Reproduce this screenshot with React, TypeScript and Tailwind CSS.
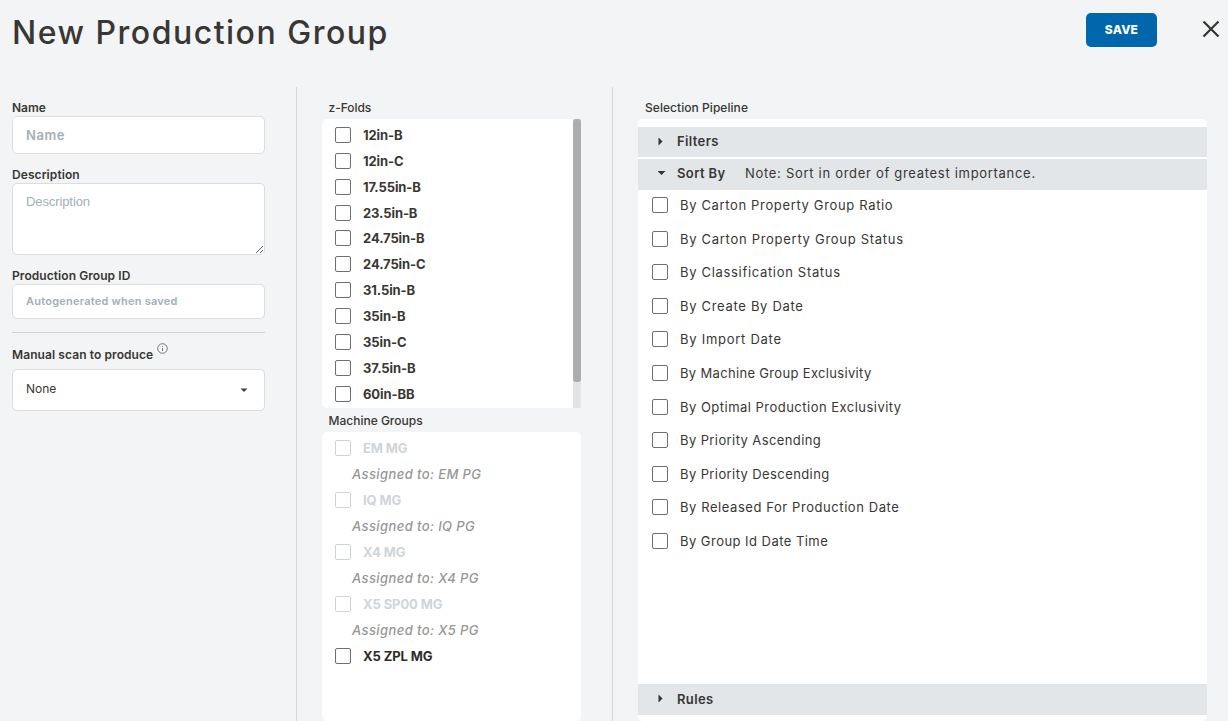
import type { ReactNode } from "react";

const zFolds = [
  "12in-B", "12in-C", "17.55in-B", "23.5in-B", "24.75in-B", "24.75in-C",
  "31.5in-B", "35in-B", "35in-C", "37.5in-B", "60in-BB",
];

const machineGroups = [
  { name: "EM MG", assigned: "EM PG" },
  { name: "IQ MG", assigned: "IQ PG" },
  { name: "X4 MG", assigned: "X4 PG" },
  { name: "X5 SP00 MG", assigned: "X5 PG" },
  { name: "X5 ZPL MG", assigned: null },
];

const sorts = [
  { name: "By Carton Property Group Ratio", tracking: "tracking-[0.65px]" },
  { name: "By Carton Property Group Status", tracking: "tracking-[0.71px]" },
  { name: "By Classification Status", tracking: "tracking-[0.68px]" },
  { name: "By Create By Date", tracking: "tracking-[0.69px]" },
  { name: "By Import Date", tracking: "tracking-[0.73px]" },
  { name: "By Machine Group Exclusivity", tracking: "tracking-[0.33px]" },
  { name: "By Optimal Production Exclusivity", tracking: "tracking-[0.48px]" },
  { name: "By Priority Ascending", tracking: "tracking-[0.4px]" },
  { name: "By Priority Descending", tracking: "tracking-[0.4px]" },
  { name: "By Released For Production Date", tracking: "tracking-[0.57px]" },
  { name: "By Group Id Date Time", tracking: "tracking-[0.46px]" },
];

function Checkbox({ disabled = false }: { disabled?: boolean }) {
  return (
    <input
      type="checkbox"
      disabled={disabled}
      className="block size-4 shrink-0 appearance-none rounded-[2px] border border-[#6f6f6f] bg-white disabled:border-[#cdd3d7]"
    />
  );
}

function Label({ children, className = "" }: { children: ReactNode; className?: string }) {
  return (
    <div className={`h-4 whitespace-nowrap text-xs leading-4 ${className}`}>{children}</div>
  );
}

function Bar({ title, note, open = false, className = "" }: { title: string; note?: string; open?: boolean; className?: string }) {
  return (
    <div className={`flex shrink-0 items-center bg-[#e3e6e9] pl-[19px] text-[13px] ${className}`}>
      <svg className="-mt-px size-2.5 shrink-0" viewBox="0 0 10 10" fill="#33332f">
        {open ? <path d="M0.5 3h8L4.5 7z" /> : <path d="M1.5 0.5v8L5.5 4.5z" />}
      </svg>
      <span className="ml-2.5 font-semibold tracking-[0.38px]">{title}</span>
      {note && <span className="ml-[19.5px] tracking-[0.7px]">{note}</span>}
    </div>
  );
}

const field =
  "block w-full rounded-[5px] border border-[#dcdcdc] bg-white px-[13px] outline-none placeholder:text-[#a3afb6]";

export default function App() {
  return (
    <div className="flex h-[721px] w-[1228px] flex-col overflow-hidden bg-[#f2f4f6] font-['Inter','Liberation_Sans',sans-serif] text-[#383733]">
      <header className="flex h-[87px] shrink-0 items-start pl-[12px] pr-[8.5px]">
        <h1 className="mt-[13px] whitespace-nowrap text-[32px] leading-10 font-medium tracking-[1.5px]">New Production Group</h1>
        <button className="ml-auto mt-[13px] h-[34px] w-[71px] rounded-[5px] bg-[#0067ac] text-xs font-extrabold tracking-[0.2px] text-white">
          SAVE
        </button>
        <button aria-label="Close" className="ml-[44.5px] mt-[19.5px]">
          <svg className="block size-[18px]" viewBox="0 0 18 18" fill="none" stroke="#33332f" strokeWidth="2.2">
            <path d="M1.5 1.5l15 15M16.5 1.5l-15 15" />
          </svg>
        </button>
      </header>

      <main className="flex min-h-0 flex-1">
        <section className="w-[297px] shrink-0 border-r border-[#d4d7da] pl-3 pr-[31px] pt-[13px]">
          <Label className="font-semibold">Name</Label>
          <input placeholder="Name" className={`${field} h-[38px] text-[13px] font-semibold tracking-[0.6px]`} />
          <Label className="mt-[13px] font-semibold tracking-[0.08px]">Description</Label>
          <textarea
            placeholder="Description"
            className={`${field} h-[72px] resize-y pt-[9px] font-['Liberation_Sans',sans-serif] text-[13px] leading-[18px] tracking-[-0.1px]`}
          />
          <Label className="mt-[13px] font-semibold tracking-[0.07px]">Production Group ID</Label>
          <input
            placeholder="Autogenerated when saved"
            className={`${field} h-[35px] pb-[2px] text-[11px] font-semibold tracking-[0.23px]`}
          />
          <hr className="mt-[13px] border-t border-[#d0d4d7]" />
          <div className="mt-[14px] flex h-4">
            <Label className="font-semibold tracking-[0.09px]">Manual scan to produce</Label>
            <svg className="ml-1 -mt-[4.5px] size-[11px]" viewBox="0 0 11 11" fill="none" stroke="#6b6b69">
              <circle cx="5.5" cy="5.5" r="4.8" strokeWidth="0.9" />
              <path d="M5.5 5v3M5.5 3v1" strokeWidth="0.9" />
            </svg>
          </div>
          <button className="mt-1.5 flex h-[42px] w-full items-center justify-between rounded-[5px] border border-[#dcdcdc] bg-white pl-[13px] pr-4 text-xs">
            <span className="-mt-0.5">None</span>
            <svg className="-mt-px h-1 w-2" viewBox="0 0 8 4" fill="#44433f">
              <path d="M0.5 0.5h7L4 4z" />
            </svg>
          </button>
        </section>

        <section className="flex w-[316px] shrink-0 flex-col border-r border-[#d4d7da] pl-[25px] pr-[31px] pt-[13px]">
          <Label className="pl-[6.5px] font-medium tracking-[-0.05px]">z-Folds</Label>
          <div className="mt-[3px] flex h-[289px] shrink-0 overflow-hidden rounded-[5px] rounded-r-none bg-white">
            <ul className="flex-1 pl-[13px] pt-[2.95px]">
              {zFolds.map((name) => (
                <li key={name} className="flex h-[25.88px] items-center gap-3 text-[13px] font-bold tracking-[-0.1px]">
                  <Checkbox />
                  <span className="pt-[1.6px]">{name}</span>
                </li>
              ))}
            </ul>
            <div className="w-2 bg-[#e4e4e4]">
              <div className="h-[263px] rounded-[3px] bg-[#adadad]" />
            </div>
          </div>
          <Label className="mt-[5px] pl-[6.5px] font-medium">Machine Groups</Label>
          <ul className="mt-[3px] flex-1 rounded-[5px] bg-white pl-[13px] pt-[3px] text-[13px]">
            {machineGroups.map(({ name, assigned }) => (
              <li key={name}>
                <div className={`flex h-[26px] items-center gap-3 font-bold tracking-[-0.1px] ${assigned ? "text-[#cfd5d9]" : "text-[#2c2b28]"}`}>
                  <Checkbox disabled={!!assigned} />
                  <span className="pt-[2px]">{name}</span>
                </div>
                {assigned && (
                  <div className="h-[26px] pl-[17px] leading-[26px] font-medium tracking-[0.4px] text-[#979795] italic">
                    Assigned to: {assigned}
                  </div>
                )}
              </li>
            ))}
          </ul>
        </section>

        <section className="flex min-w-0 flex-1 flex-col pl-[25px] pr-[21px] pt-[13px]">
          <Label className="pl-[7px] font-medium tracking-[0.05px]">Selection Pipeline</Label>
          <div className="mt-[3px] flex flex-1 flex-col rounded-[5px] bg-white pb-1.5 pt-2">
            <Bar title="Filters" className="h-[30px]" />
            <Bar title="Sort By" note="Note: Sort in order of greatest importance." open className="mt-0.5 h-[31px] pb-[2px]" />
            <ul className="flex-1 pl-3.5 text-[13px]">
              {sorts.map(({ name, tracking }) => (
                <li key={name} className="flex h-[33.6px] items-start gap-3 pt-[7px]">
                  <Checkbox />
                  <span className={`leading-[17px] ${tracking}`}>{name}</span>
                </li>
              ))}
            </ul>
            <Bar title="Rules" className="h-[31px]" />
          </div>
        </section>
      </main>
    </div>
  );
}
